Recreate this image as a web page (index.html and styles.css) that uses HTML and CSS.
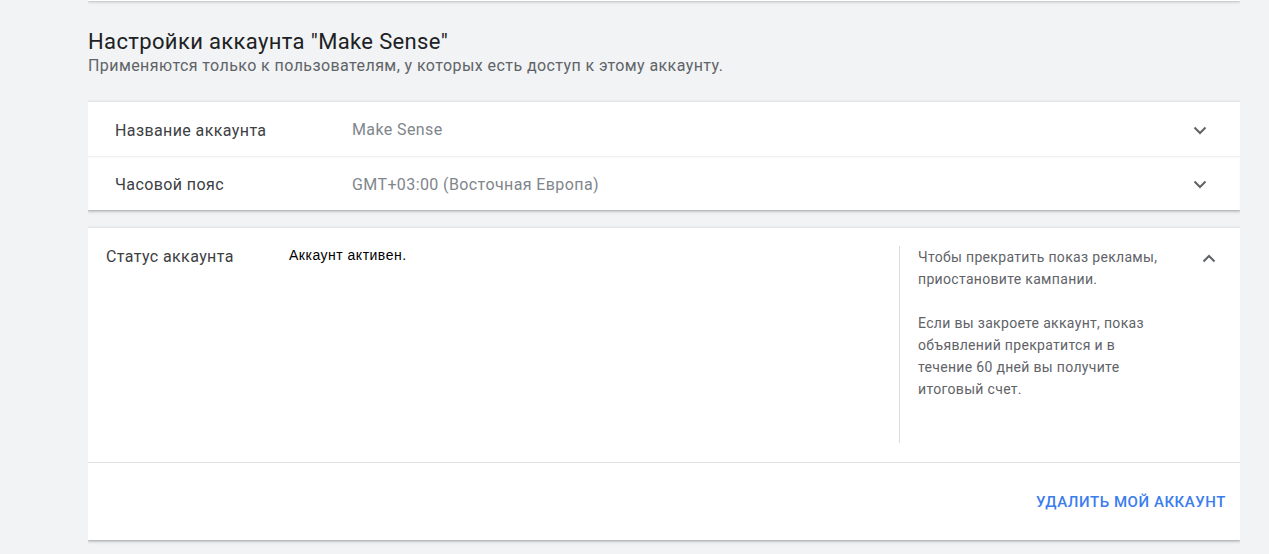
FILE: index.html
```html
<!DOCTYPE html>
<html lang="ru">
<head>
<meta charset="utf-8">
<link rel="stylesheet" href="styles.css">
</head>
<body>
<div class="page">
  <div class="top-card"></div>
  <header class="head">
    <h1 class="title">Настройки аккаунта "Make Sense"</h1>
    <p class="subtitle">Применяются только к пользователям, у которых есть доступ к этому аккаунту.</p>
  </header>

  <section class="card">
    <div class="row">
      <div class="label">Название аккаунта</div>
      <div class="value">Make Sense</div>
      <svg class="chev" width="14" height="9" viewBox="0 0 14 9"><path d="M1.5 1.5 L7 7 L12.5 1.5" fill="none" stroke="#5f6368" stroke-width="2"/></svg>
    </div>
    <div class="row row-sep">
      <div class="label">Часовой пояс</div>
      <div class="value">GMT+03:00 (Восточная Европа)</div>
      <svg class="chev" width="14" height="9" viewBox="0 0 14 9"><path d="M1.5 1.5 L7 7 L12.5 1.5" fill="none" stroke="#5f6368" stroke-width="2"/></svg>
    </div>
  </section>

  <section class="card status">
    <div class="status-body">
      <div class="status-label">Статус аккаунта</div>
      <div class="status-value">Аккаунт активен.</div>
      <div class="status-help">
        <p>Чтобы прекратить показ рекламы, приостановите кампании.</p>
        <p>Если вы закроете аккаунт, показ объявлений прекратится и в течение 60 дней вы получите итоговый счет.</p>
      </div>
      <svg class="chev-up" width="14" height="9" viewBox="0 0 14 9"><path d="M1.5 7.5 L7 2 L12.5 7.5" fill="none" stroke="#5f6368" stroke-width="2"/></svg>
    </div>
    <div class="status-foot">
      <button class="delete">УДАЛИТЬ МОЙ АККАУНТ</button>
    </div>
  </section>
</div>
</body>
</html>
```

FILE: styles.css
```css
html, body {
  margin: 0;
  padding: 0;
  background: #f1f3f4;
  font-family: Roboto, "Noto Sans", Arial, sans-serif;
}
.page {
  width: 1152px;
  margin-left: 88px;
  height: 554px;
  overflow: hidden;
}
.top-card {
  height: 1px;
  background: #fff;
  box-shadow: 0 1px 2px rgba(60,64,67,.35), 0 1px 4px rgba(60,64,67,.2);
}
.head {
  padding-top: 27px;
}
.title {
  margin: 0;
  font-size: 22px;
  font-weight: 400;
  line-height: 28px;
  letter-spacing: 0.36px;
  color: #202124;
}
.subtitle {
  margin: 0;
  font-size: 16px;
  line-height: 20px;
  letter-spacing: 0.42px;
  color: #5f6368;
}
.card {
  background: #fff;
  box-shadow: 0 1px 2px rgba(60,64,67,.3), 0 1px 3px 1px rgba(60,64,67,.15);
  margin-top: 26px;
}
.row {
  box-sizing: border-box;
  display: flex;
  align-items: center;
  height: 54px;
  padding: 3px 33px 0 27px;
}
.row + .row {
  height: 54px;
  padding-top: 2px;
}
.row-sep {
  border-top: 1px solid #f1f1f1;
  box-shadow: inset 0 1px 2px rgba(0,0,0,.03);
}
.label {
  width: 237px;
  font-size: 16px;
  letter-spacing: 0.4px;
  color: #3c4043;
}
.value {
  flex: 1;
  font-size: 16px;
  letter-spacing: 0.4px;
  color: #80868b;
}
.row:first-child .value { position: relative; top: -1px; }
.chev { display: block; }

.status {
  margin-top: 18px;
}
.status-body {
  display: flex;
  padding: 18px 24px 0 18px;
  height: 216px;
  border-bottom: 1px solid #e0e0e0;
}
.status-label {
  width: 183px;
  font-size: 16px;
  line-height: 20px;
  letter-spacing: 0.4px;
  color: #3c4043;
  padding-top: 1px;
}
.status-value {
  flex: 1;
  font-family: Arial, "Liberation Sans", sans-serif;
  font-size: 14px;
  line-height: 18px;
  letter-spacing: 0.5px;
  color: #000;
}
.status-help {
  width: 240px;
  height: 197px;
  border-left: 1px solid #dadce0;
  padding-left: 18px;
  margin-right: 44px;
  font-size: 14px;
  line-height: 22px;
  letter-spacing: 0.32px;
  color: #5f6368;
}
.status-help p {
  margin: 0 0 22px;
}
.chev-up {
  display: block;
  margin-top: 8px;
}
.status-foot {
  display: flex;
  justify-content: flex-end;
  height: 77px;
  align-items: center;
  padding-right: 14px;
}
.delete {
  border: 0;
  background: none;
  padding: 0;
  font-family: Roboto, Arial, sans-serif;
  font-size: 15px;
  font-weight: 500;
  color: #3b7ded;
  letter-spacing: 0.55px;
  margin-top: 1px;
}
```
